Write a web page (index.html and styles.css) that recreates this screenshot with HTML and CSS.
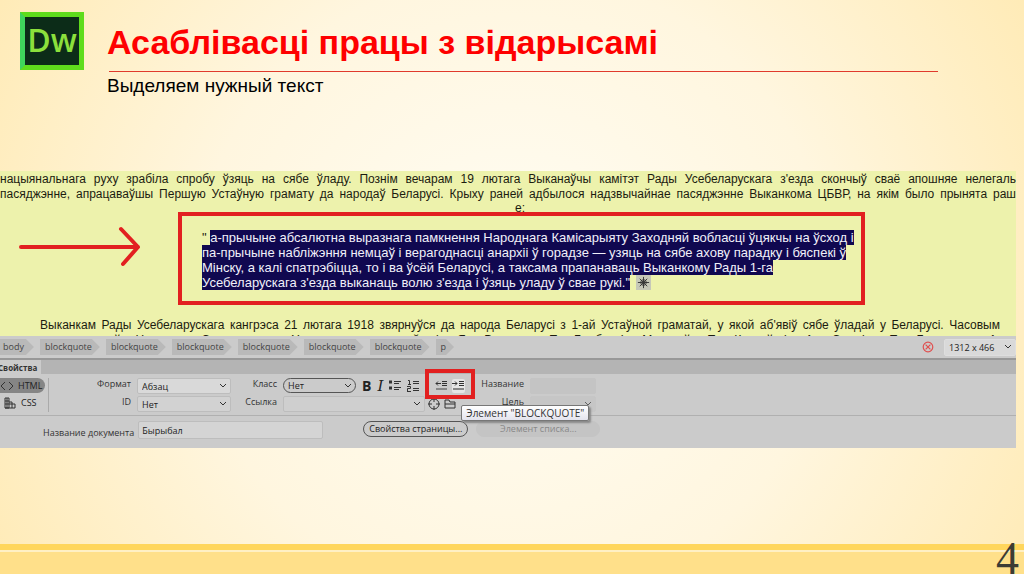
FILE: index.html
```html
<!DOCTYPE html>
<html lang="be">
<head>
    <meta charset="UTF-8">
    <meta name="viewport" content="width=device-width, initial-scale=1.0">
    <title>Асаблівасці працы з відарысамі</title>
    <link rel="stylesheet" href="styles.css">
</head>
<body>
    <main class="slide">
        <header class="slide-header">
            <div class="logo">Dw</div>
            <div class="heading">
                <h1>Асаблівасці працы з відарысамі</h1>
                <p class="subtitle">Выделяем нужный текст</p>
            </div>
        </header>

        <section class="editor">
            <div class="document">
                <p class="line justify">нацыянальнага руху зрабіла спробу ўзяць на сябе ўладу. Познім вечарам 19 лютага Выканаўчы камітэт Рады Усебеларускага з'езда скончыў сваё апошняе нелегаль</p>
                <p class="line justify">пасяджэнне, апрацаваўшы Першую Устаўную грамату да народаў Беларусі. Крыху раней адбылося надзвычайнае пасяджэнне Выканкома ЦБВР, на якім было прынята раш</p>
                <p class="line center">е:</p>
                <div class="quote-row">
                    <svg class="arrow" viewBox="0 0 124 44" aria-hidden="true">
                        <path d="M2 22H119M102 4L119 22L104 39"/>
                    </svg>
                    <blockquote>
                        " <mark>а-прычыне абсалютна выразнага памкнення Народнага Камісарыяту Заходняй вобласці ўцякчы на ўсход і</mark><br>
                        <mark>па-прычыне набліжэння немцаў і верагоднасці анархіі ў горадзе — узяць на сябе ахову парадку і бяспекі ў</mark><br>
                        <mark>Мінску, а калі спатрэбіцца, то і ва ўсёй Беларусі, а таксама прапанаваць Выканкому Рады 1-га</mark><br>
                        <mark>Усебеларускага з'езда выканаць волю з'езда і ўзяць уладу ў свае рукі."</mark>
                        <span class="wheel"><svg viewBox="0 0 16 16" aria-hidden="true"><circle cx="8" cy="8" r="3"/><path d="M8 2V14M2 8H14M4 4L12 12M12 4L4 12"/></svg></span>
                    </blockquote>
                </div>
                <p class="line indent justify">Выканкам Рады Усебеларускага кангрэса 21 лютага 1918 звярнуўся да народа Беларусі з 1-ай Устаўной граматай, у якой аб'явіў сябе ўладай у Беларусі. Часовым</p>
                <p class="line indent justify">урадам стаў Народны Сакратарыят. У яго склад увайшлі: Я. Варонка, Т. Грыб, І. Макрэеў, П. Крачэўскі, А. Смоліч, П. Бадунова, А.</p>
            </div>

            <nav class="tag-bar">
                <a class="tag first" href="#">body</a>
                <a class="tag" href="#">blockquote</a>
                <a class="tag" href="#">blockquote</a>
                <a class="tag" href="#">blockquote</a>
                <a class="tag" href="#">blockquote</a>
                <a class="tag" href="#">blockquote</a>
                <a class="tag" href="#">blockquote</a>
                <a class="tag" href="#">p</a>
                <svg class="error" viewBox="0 0 10 10" aria-hidden="true"><circle cx="5" cy="5" r="4"/><path d="M3 3L7 7M7 3L3 7"/></svg>
                <select class="size" aria-label="Размер окна"><option>1312 x 466</option></select>
            </nav>

            <div class="panel-tabs"><span class="panel-tab">Свойства</span></div>

            <div class="panel">
                <div class="modes">
                    <button class="mode active" type="button">
                        <svg viewBox="0 0 14 12" aria-hidden="true"><path d="M5 2L1 6L5 10M9 2L13 6L9 10"/></svg>HTML
                    </button>
                    <button class="mode" type="button">
                        <svg class="css-icon" viewBox="0 0 12 12" aria-hidden="true"><path d="M1 1H5V11H1ZM1 4H5M1 7H11V11M5 5H8V11M1 11H11M3 1V11"/></svg>CSS
                    </button>
                </div>
                <div class="fields">
                    <label for="format">Формат</label>
                    <select id="format"><option>Абзац</option></select>
                    <label for="class">Класс</label>
                    <select id="class" class="pill"><option>Нет</option></select>
                    <div class="tools">
                        <button class="bold" type="button">B</button>
                        <button class="italic" type="button">I</button>
                        <button type="button" aria-label="Список"><svg viewBox="0 0 12 12"><path d="M0 2H3M0 8H3" stroke-width="3"/><path d="M5 1.5H12M5 3.5H10M5 7.5H12M5 9.5H10"/></svg></button>
                        <button type="button" aria-label="Нумерованный список"><svg viewBox="0 0 12 12"><path d="M1 .5H2.5V4M1 4.5H4M0 6.5H3.5V8.5H.5V11M0 11.5H4M6 1.5H12M6 3.5H12M6 8.5H12M6 10.5H12"/></svg></button>
                        <div class="indent-tools">
                            <button type="button" aria-label="Отступ влево"><svg viewBox="0 0 12 12"><path d="M1 3.5H6M3 1.5L1 3.5L3 5.5M7 1.5H12M7 3.5H12M7 5.5H12"/><path class="soft" d="M1 9H12" stroke-width="2"/></svg></button>
                            <button class="hover" type="button" aria-label="Отступ вправо"><svg viewBox="0 0 12 12"><path d="M0 3.5H5M3 1.5L5 3.5L3 5.5M7 1.5H12M7 3.5H12M7 5.5H12"/><path class="soft" d="M1 9H12" stroke-width="2"/></svg></button>
                            <span class="tooltip" role="tooltip">Элемент "BLOCKQUOTE"</span>
                        </div>
                    </div>
                    <label for="title">Название</label>
                    <input id="title" type="text" disabled>

                    <label for="id">ID</label>
                    <select id="id" class="split"><option>Нет</option></select>
                    <label for="link">Ссылка</label>
                    <div class="link-row">
                        <select id="link" class="split empty"><option></option></select>
                        <button type="button" aria-label="Указать файл"><svg viewBox="0 0 12 12"><circle cx="6" cy="6" r="5"/><path d="M6 0V4M6 8V12M0 6H4M8 6H12"/></svg></button>
                        <button type="button" aria-label="Обзор"><svg viewBox="0 0 12 12"><path d="M1 10V2H5L6 4H11V10ZM1 6H11"/></svg></button>
                    </div>
                    <label for="target">Цель</label>
                    <select id="target" disabled><option></option></select>
                </div>
            </div>

            <div class="panel-bottom">
                <label for="doc-title">Название документа</label>
                <input id="doc-title" type="text" value="Бырыбал">
                <button class="page-button" type="button">Свойства страницы...</button>
                <button class="page-button" type="button" disabled>Элемент списка...</button>
            </div>
        </section>

        <footer class="slide-footer"><span class="page-number">4</span></footer>
    </main>
</body>
</html>
```

FILE: styles.css
```css
* {
    box-sizing: border-box;
}
body {
    margin: 0;
    font-family: "Liberation Sans", Arial, sans-serif;
    color: #000;
}
.slide {
    display: flex;
    flex-direction: column;
    min-height: 100vh;
    overflow: hidden;
    background: radial-gradient(ellipse 62% 110% at 50% 50%, #fffdf4 0%, #fff6df 50%, #ffe9b0 100%);
}
.slide-header {
    display: flex;
    gap: 23px;
    height: 171px;
    padding: 12px 86px 0 20px;
}
.logo {
    width: 64px;
    height: 58px;
    border: 5px solid #5fdc1c;
    border-left-color: #3fd45c;
    background: #0c2c18;
    color: #8ce03c;
    font: 600 32px/46px "Open Sans", sans-serif;
    text-align: center;
}
.heading {
    flex: 1;
}
h1 {
    margin: 0 0 0 2px;
    padding-top: 9px;
    height: 60px;
    border-bottom: 1px solid #e03a2c;
    color: #fe0000;
    font-size: 34px;
    line-height: 42px;
    text-indent: -2px;
    white-space: nowrap;
}
.subtitle {
    margin: 4px 0 0;
    font-size: 19px;
    line-height: 20px;
}

/* editor window */
.editor {
    margin-right: 8px;
    background: #cbcbcb;
    font-family: "Open Sans", sans-serif;
    font-size: 9px;
    color: #333;
}
.document {
    height: 165px;
    overflow: hidden;
    background: #edf2ac;
    color: #1c1c10;
    font-family: "Liberation Sans", Arial, sans-serif;
    font-size: 12px;
    line-height: 15px;
    white-space: nowrap;
}
.line {
    margin: 0;
}
.line:first-child {
    padding-top: 1px;
}
.justify {
    text-align-last: justify;
}
.center {
    height: 10px;
    padding-left: 24px;
    line-height: 12px;
    text-align: center;
}
.indent {
    padding: 0 16px 0 40px;
}
.quote-row {
    display: flex;
    align-items: flex-start;
    margin-bottom: 13px;
}
.arrow {
    width: 124px;
    height: 44px;
    margin: 13px 35px 0 19px;
    fill: none;
    stroke: #e22020;
    stroke-width: 4px;
    stroke-linecap: round;
    stroke-linejoin: round;
}
blockquote {
    width: 687px;
    height: 93px;
    margin: 0;
    padding: 14px 20px;
    border: 4px solid #e22020;
    font-size: 13px;
}
mark {
    background: #100850;
    color: #f0f0fa;
}
.wheel {
    display: inline-block;
    width: 15px;
    height: 15px;
    margin-left: 2px;
    background: #c6c8b8;
    vertical-align: top;
}
svg {
    display: block;
    fill: none;
    stroke: #333;
}

/* tag selector */
.tag-bar {
    display: flex;
    align-items: center;
    gap: 6px;
    height: 24px;
    border-bottom: 2px solid #989898;
}
.tag {
    padding: 0 8px 0 5px;
    background: #b9b9b9;
    clip-path: polygon(0 0, calc(100% - 8px) 0, 100% 50%, calc(100% - 8px) 100%, 0 100%);
    color: #444;
    line-height: 16px;
    text-decoration: none;
}
.first {
    padding: 0 10px 0 3px;
}
.error {
    width: 12px;
    height: 12px;
    margin-left: auto;
    stroke: #e05050;
}
select, input, button {
    margin: 0;
    border: 1px solid #bdbdbd;
    border-radius: 2px;
    background: #d4d4d4;
    color: #222;
    font: inherit;
}
select {
    appearance: none;
    height: 17px;
    padding: 0 4px;
    background: #d9d9d9 url("data:image/svg+xml,%3Csvg xmlns='http://www.w3.org/2000/svg' width='8' height='6'%3E%3Cpath d='M1 1L4 4L7 1' fill='none' stroke='%23333'/%3E%3C/svg%3E") right 3px center no-repeat;
}
.size {
    width: 72px;
    margin-left: 4px;
    border-color: #dedede;
}

/* properties panel */
.panel-tabs {
    height: 14px;
    background: #b4b4b4;
}
.panel-tab {
    display: inline-block;
    width: 41px;
    height: 15px;
    background: #cbcbcb;
    font-size: 8px;
    font-weight: bold;
    line-height: 15px;
    text-indent: -2px;
}
.panel {
    display: flex;
    height: 42px;
    padding-top: 4px;
    border-bottom: 1px solid #b0b0b0;
}
.modes {
    width: 49px;
    height: 34px;
    border-right: 1px solid #aaa;
}
.mode {
    display: flex;
    align-items: center;
    gap: 4px;
    width: 45px;
    height: 15px;
    margin-bottom: 2px;
    padding: 0;
    border: 0;
    background: none;
}
.mode svg {
    flex: none;
    width: 14px;
    height: 12px;
}
.mode .css-icon {
    margin-left: 3px;
}
.active {
    border-radius: 0 8px 8px 0;
    background: #858585;
}
.fields {
    display: grid;
    grid-template-columns: 82px 94px 40px 73px 108px 48px 66px;
    grid-template-rows: 15px 15px;
    column-gap: 6px;
    row-gap: 3px;
}
.fields label {
    line-height: 12px;
    text-align: right;
    white-space: nowrap;
}
.fields select, .fields input {
    width: 100%;
    height: 16px;
}
.fields .pill {
    height: 15px;
    border-color: #555;
    border-radius: 8px;
    background-color: transparent;
}
.tools, .link-row {
    display: flex;
    align-items: center;
}
.tools {
    gap: 6px;
}
.link-row {
    grid-column: 4 / 6;
    gap: 3px;
}
.fields .link-row select {
    width: 142px;
}
.fields .split {
    background-color: #d2d2d2;
}
.fields .empty {
    background-color: #cfcfcf;
}
.tools button, .link-row button {
    width: 13px;
    height: 14px;
    padding: 0;
    border: 0;
    background: none;
}
.tools button svg, .link-row button svg {
    width: 12px;
    height: 12px;
}
.tools .bold {
    font-size: 14px;
    font-weight: bold;
    line-height: 14px;
}
.tools .italic {
    font: italic 15px/14px "DejaVu Serif", serif;
}
.indent-tools {
    position: relative;
    display: flex;
    flex: none;
    gap: 4px;
    width: 50px;
    height: 30px;
    margin: 0 0 4px -10px;
    padding: 6px 4px 0 6px;
    border: 4px solid #e22020;
}
.tools .indent-tools {
    margin-left: 0;
}
.tools .hover {
    background: #e6e6e6;
}
.soft {
    stroke: #888;
}
.tooltip {
    position: absolute;
    z-index: 1;
    top: 32px;
    left: 32px;
    padding: 0 4px;
    border: 1px solid #777;
    border-radius: 2px;
    background: linear-gradient(#fff, #e4e4ee);
    box-shadow: 2px 2px 2px #888;
    font-size: 10px;
    line-height: 14px;
    white-space: nowrap;
}
.fields :disabled, .page-button:disabled {
    border-color: #c4c4c4;
    background-color: #c4c4c4;
    color: #888;
}
.panel-bottom {
    display: flex;
    align-items: center;
    height: 32px;
    padding: 0 0 0 43px;
}
.panel-bottom input {
    width: 185px;
    height: 18px;
    margin: 0 40px 4px 4px;
    padding: 0 3px;
}
.page-button {
    width: 105px;
    height: 16px;
    margin: 0 8px 6px 0;
    padding: 0;
    border-color: #555;
    border-radius: 8px;
    background: none;
    line-height: 14px;
    white-space: nowrap;
}
.page-button:disabled {
    width: 124px;
}

.slide-footer {
    height: 30px;
    margin-top: auto;
    border-top: 6px solid #ffd65c;
    background: linear-gradient(#fff0c4 2px, #ffe08a 2px);
    text-align: right;
}
.page-number {
    display: block;
    margin-top: -14px;
    padding-right: 5px;
    color: #3c3c34;
    font: 46px/46px "Liberation Serif", serif;
}
```
